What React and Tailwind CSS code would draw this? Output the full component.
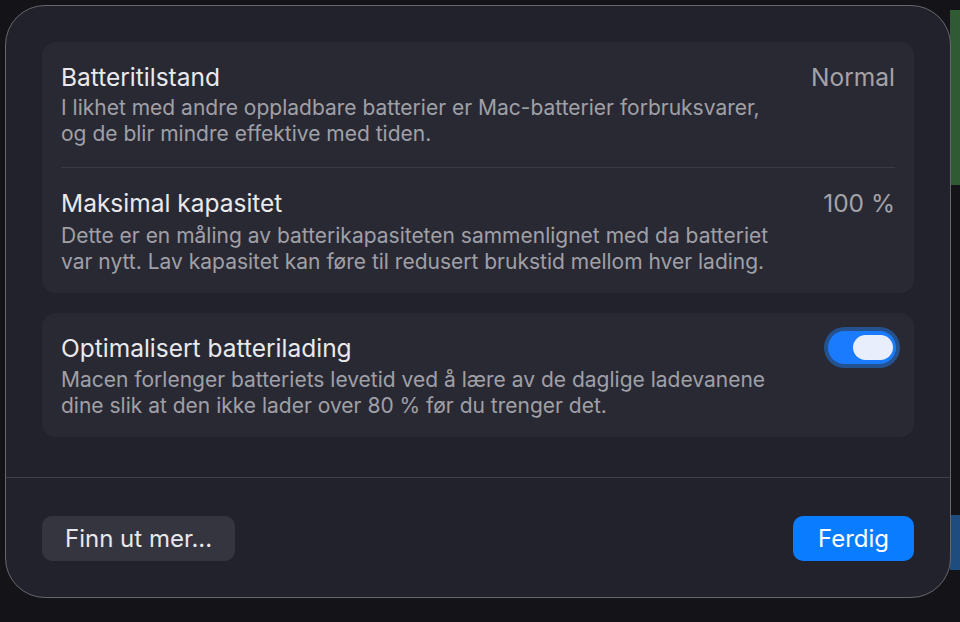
export default function App() {
  return (
    <div
      className="relative w-[960px] h-[622px] overflow-hidden bg-[#141418]"
      style={{ fontFamily: 'Inter, "Noto Sans", sans-serif' }}
    >
      {/* background window remnants */}
      <div className="absolute right-0 top-[10px] w-[10px] h-[175px] bg-[#2f5a34]" />
      <div className="absolute right-0 top-[515px] w-[10px] h-[55px] bg-[#1f4c7e]" />

      <div className="relative ml-[5px] mt-[5px] w-[946px] h-[593px] rounded-[40px] border border-[#66666d] bg-[#22222c] flex flex-col">
        <div className="px-[36px] pt-[36px] flex flex-col gap-[20px]">
          {/* Card 1 */}
          <div className="rounded-[14px] bg-[#292934] px-[19px] pb-[18px] flex flex-col">
            <div className="pt-[20px] pb-[20px] flex justify-between border-b border-[#3a3a45]">
              <div className="flex flex-col gap-[3px]">
                <div className="text-[24.5px] leading-[30px] text-[#e9e9ec]">Batteritilstand</div>
                <div className="text-[21px] leading-[26px] text-[#a0a0a7]">
                  I likhet med andre oppladbare batterier er Mac-batterier forbruksvarer,
                  <br />
                  og de blir mindre effektive med tiden.
                </div>
              </div>
              <div className="text-[24.5px] leading-[30px] text-[#a3a3a9]">Normal</div>
            </div>
            <div className="pt-[20px] flex justify-between">
              <div className="flex flex-col gap-[5px]">
                <div className="text-[24.5px] leading-[30px] text-[#e9e9ec]">Maksimal kapasitet</div>
                <div className="text-[21px] leading-[26px] text-[#a0a0a7]">
                  Dette er en måling av batterikapasiteten sammenlignet med da batteriet
                  <br />
                  var nytt. Lav kapasitet kan føre til redusert brukstid mellom hver lading.
                </div>
              </div>
              <div className="text-[24.5px] leading-[30px] text-[#a3a3a9]">100 %</div>
            </div>
          </div>

          {/* Card 2 */}
          <div className="rounded-[14px] bg-[#292934] pl-[19px] pr-[14px] pt-[20px] pb-[18px] flex justify-between">
            <div className="flex flex-col gap-[4px]">
              <div className="text-[24.5px] leading-[30px] text-[#e9e9ec]">Optimalisert batterilading</div>
              <div className="text-[21px] leading-[26px] text-[#a0a0a7]">
                Macen forlenger batteriets levetid ved å lære av de daglige ladevanene
                <br />
                dine slik at den ikke lader over 80 % før du trenger det.
              </div>
            </div>
            <div className="mt-[-6px] w-[76px] h-[41px] rounded-full bg-[#24528e] p-[4px]">
              <div className="w-full h-full rounded-full bg-[#1a7bff] flex items-center justify-end pr-[3px]">
                <div className="w-[40px] h-[25px] rounded-full bg-[#e8eefb]" />
              </div>
            </div>
          </div>
        </div>

        <div className="mt-[40px] h-px bg-[#3f3f49]" />

        <div className="px-[36px] pt-[38px] flex justify-between">
          <div className="h-[45px] rounded-[10px] bg-[#35353f] px-[23px] flex items-center text-[24px] text-[#e8e8eb]">
            Finn ut mer...
          </div>
          <div className="h-[45px] w-[121px] rounded-[10px] bg-[#0a7cff] flex items-center justify-center text-[24px] text-white">
            Ferdig
          </div>
        </div>
      </div>
    </div>
  );
}
